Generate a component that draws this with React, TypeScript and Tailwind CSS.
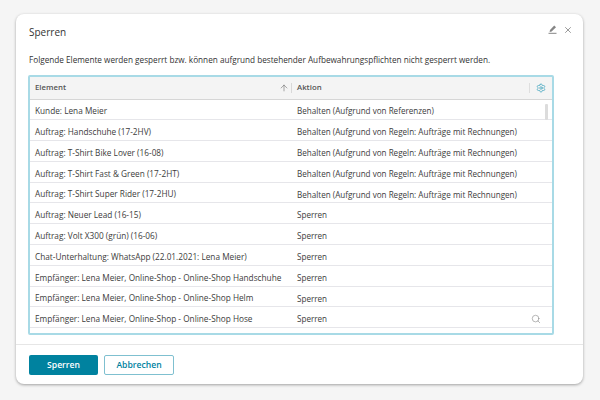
import { ArrowUp, Search, Settings, X } from 'lucide-react';

const rows = [
  ['Kunde: Lena Meier', 'Behalten (Aufgrund von Referenzen)'],
  ['Auftrag: Handschuhe (17-2HV)', 'Behalten (Aufgrund von Regeln: Aufträge mit Rechnungen)'],
  ['Auftrag: T-Shirt Bike Lover (16-08)', 'Behalten (Aufgrund von Regeln: Aufträge mit Rechnungen)'],
  ['Auftrag: T-Shirt Fast & Green (17-2HT)', 'Behalten (Aufgrund von Regeln: Aufträge mit Rechnungen)'],
  ['Auftrag: T-Shirt Super Rider (17-2HU)', 'Behalten (Aufgrund von Regeln: Aufträge mit Rechnungen)'],
  ['Auftrag: Neuer Lead (16-15)', 'Sperren'],
  ['Auftrag: Volt X300 (grün) (16-06)', 'Sperren'],
  ['Chat-Unterhaltung: WhatsApp (22.01.2021: Lena Meier)', 'Sperren'],
  ['Empfänger: Lena Meier, Online-Shop - Online-Shop Handschuhe', 'Sperren'],
  ['Empfänger: Lena Meier, Online-Shop - Online-Shop Helm', 'Sperren'],
  ['Empfänger: Lena Meier, Online-Shop - Online-Shop Hose', 'Sperren'],
];

const App = () => {
  return (
    <div className="w-[600px] h-[400px] overflow-hidden bg-[#f5f5f5] pt-[14px] pl-[16px] font-['Open_Sans',sans-serif] text-[#333]">
      <div className="w-[567px] h-[370px] bg-white rounded-[8px] shadow-[0_1px_3px_rgba(0,0,0,0.35)] flex flex-col">
        <div className="h-[35px] pl-[13px] pr-[10px] flex items-center justify-between">
          <span className="text-[10px] leading-none">Sperren</span>
          <div className="flex items-center gap-[6px] text-[#858585] -mt-[4px]">
            <svg width="9" height="9" viewBox="0 0 9 9" fill="currentColor">
              <path d="M6.2 0.6 8 2.2 3.6 6.4 1.6 6.9 2 4.9Z" />
              <rect x="0.5" y="7.8" width="8" height="1" />
            </svg>
            <X size={10} strokeWidth={2} />
          </div>
        </div>
        <p className="pl-[13px] mt-[4px] h-[14px] text-[8.2px] leading-[14px] whitespace-nowrap">
          Folgende Elemente werden gesperrt bzw. können aufgrund bestehender Aufbewahrungspflichten nicht gesperrt werden.
        </p>
        <div className="ml-[12px] mt-[8px] w-[526px] h-[260px] border-2 border-[#a8dae6] rounded-[2px] overflow-hidden shrink-0">
          <div className="h-[22.5px] bg-[#f4f4f4] border-b border-[#d6d6d6] flex items-center text-[7.8px] font-semibold text-[#555]">
            <div className="w-[261px] pl-[5px] flex items-center justify-between">
              <span>Element</span>
              <ArrowUp size={10} strokeWidth={1.2} className="text-[#555] mr-[2px]" />
            </div>
            <div className="w-px h-[10px] bg-[#d8d8d8]" />
            <div className="flex-1 pl-[5px] pr-[6px] flex items-center justify-between">
              <span>Aktion</span>
              <div className="flex items-center gap-[6px]">
                <div className="w-px h-[10px] bg-[#dedede]" />
                <Settings size={10} strokeWidth={1.5} className="text-[#1f95b3]" />
              </div>
            </div>
          </div>
          <div className="relative">
            {rows.map((row) => (
              <div key={row[0]} className="h-[20.8px] pt-[4px] border-b border-[#e6e6ea] flex items-center text-[#3c3c3c]">
                <div className="w-[262px] pl-[5px] text-[8.25px] whitespace-nowrap">{row[0]}</div>
                <div className="flex-1 pl-[5px] text-[8.1px] whitespace-nowrap">{row[1]}</div>
              </div>
            ))}
            <div className="absolute top-[4.5px] right-[4px] w-[3px] h-[16px] bg-[#dcdcdc] rounded-[1px]" />
            <Search size={10} strokeWidth={1.3} className="absolute top-[214px] right-[11px] text-[#7a7a7a]" />
          </div>
        </div>
        <div className="mt-[9px] border-t border-[#e6e6e6] pt-[10px] pl-[13px] flex gap-[6px]">
          <button className="w-[69px] h-[20px] rounded-[2px] bg-[#00829f] text-white text-[8.6px] font-semibold">Sperren</button>
          <button className="w-[70px] h-[20px] rounded-[2px] border border-[#7fc0d0] bg-white text-[#00829f] text-[8.6px] font-semibold">Abbrechen</button>
        </div>
      </div>
    </div>
  );
};

export default App;
